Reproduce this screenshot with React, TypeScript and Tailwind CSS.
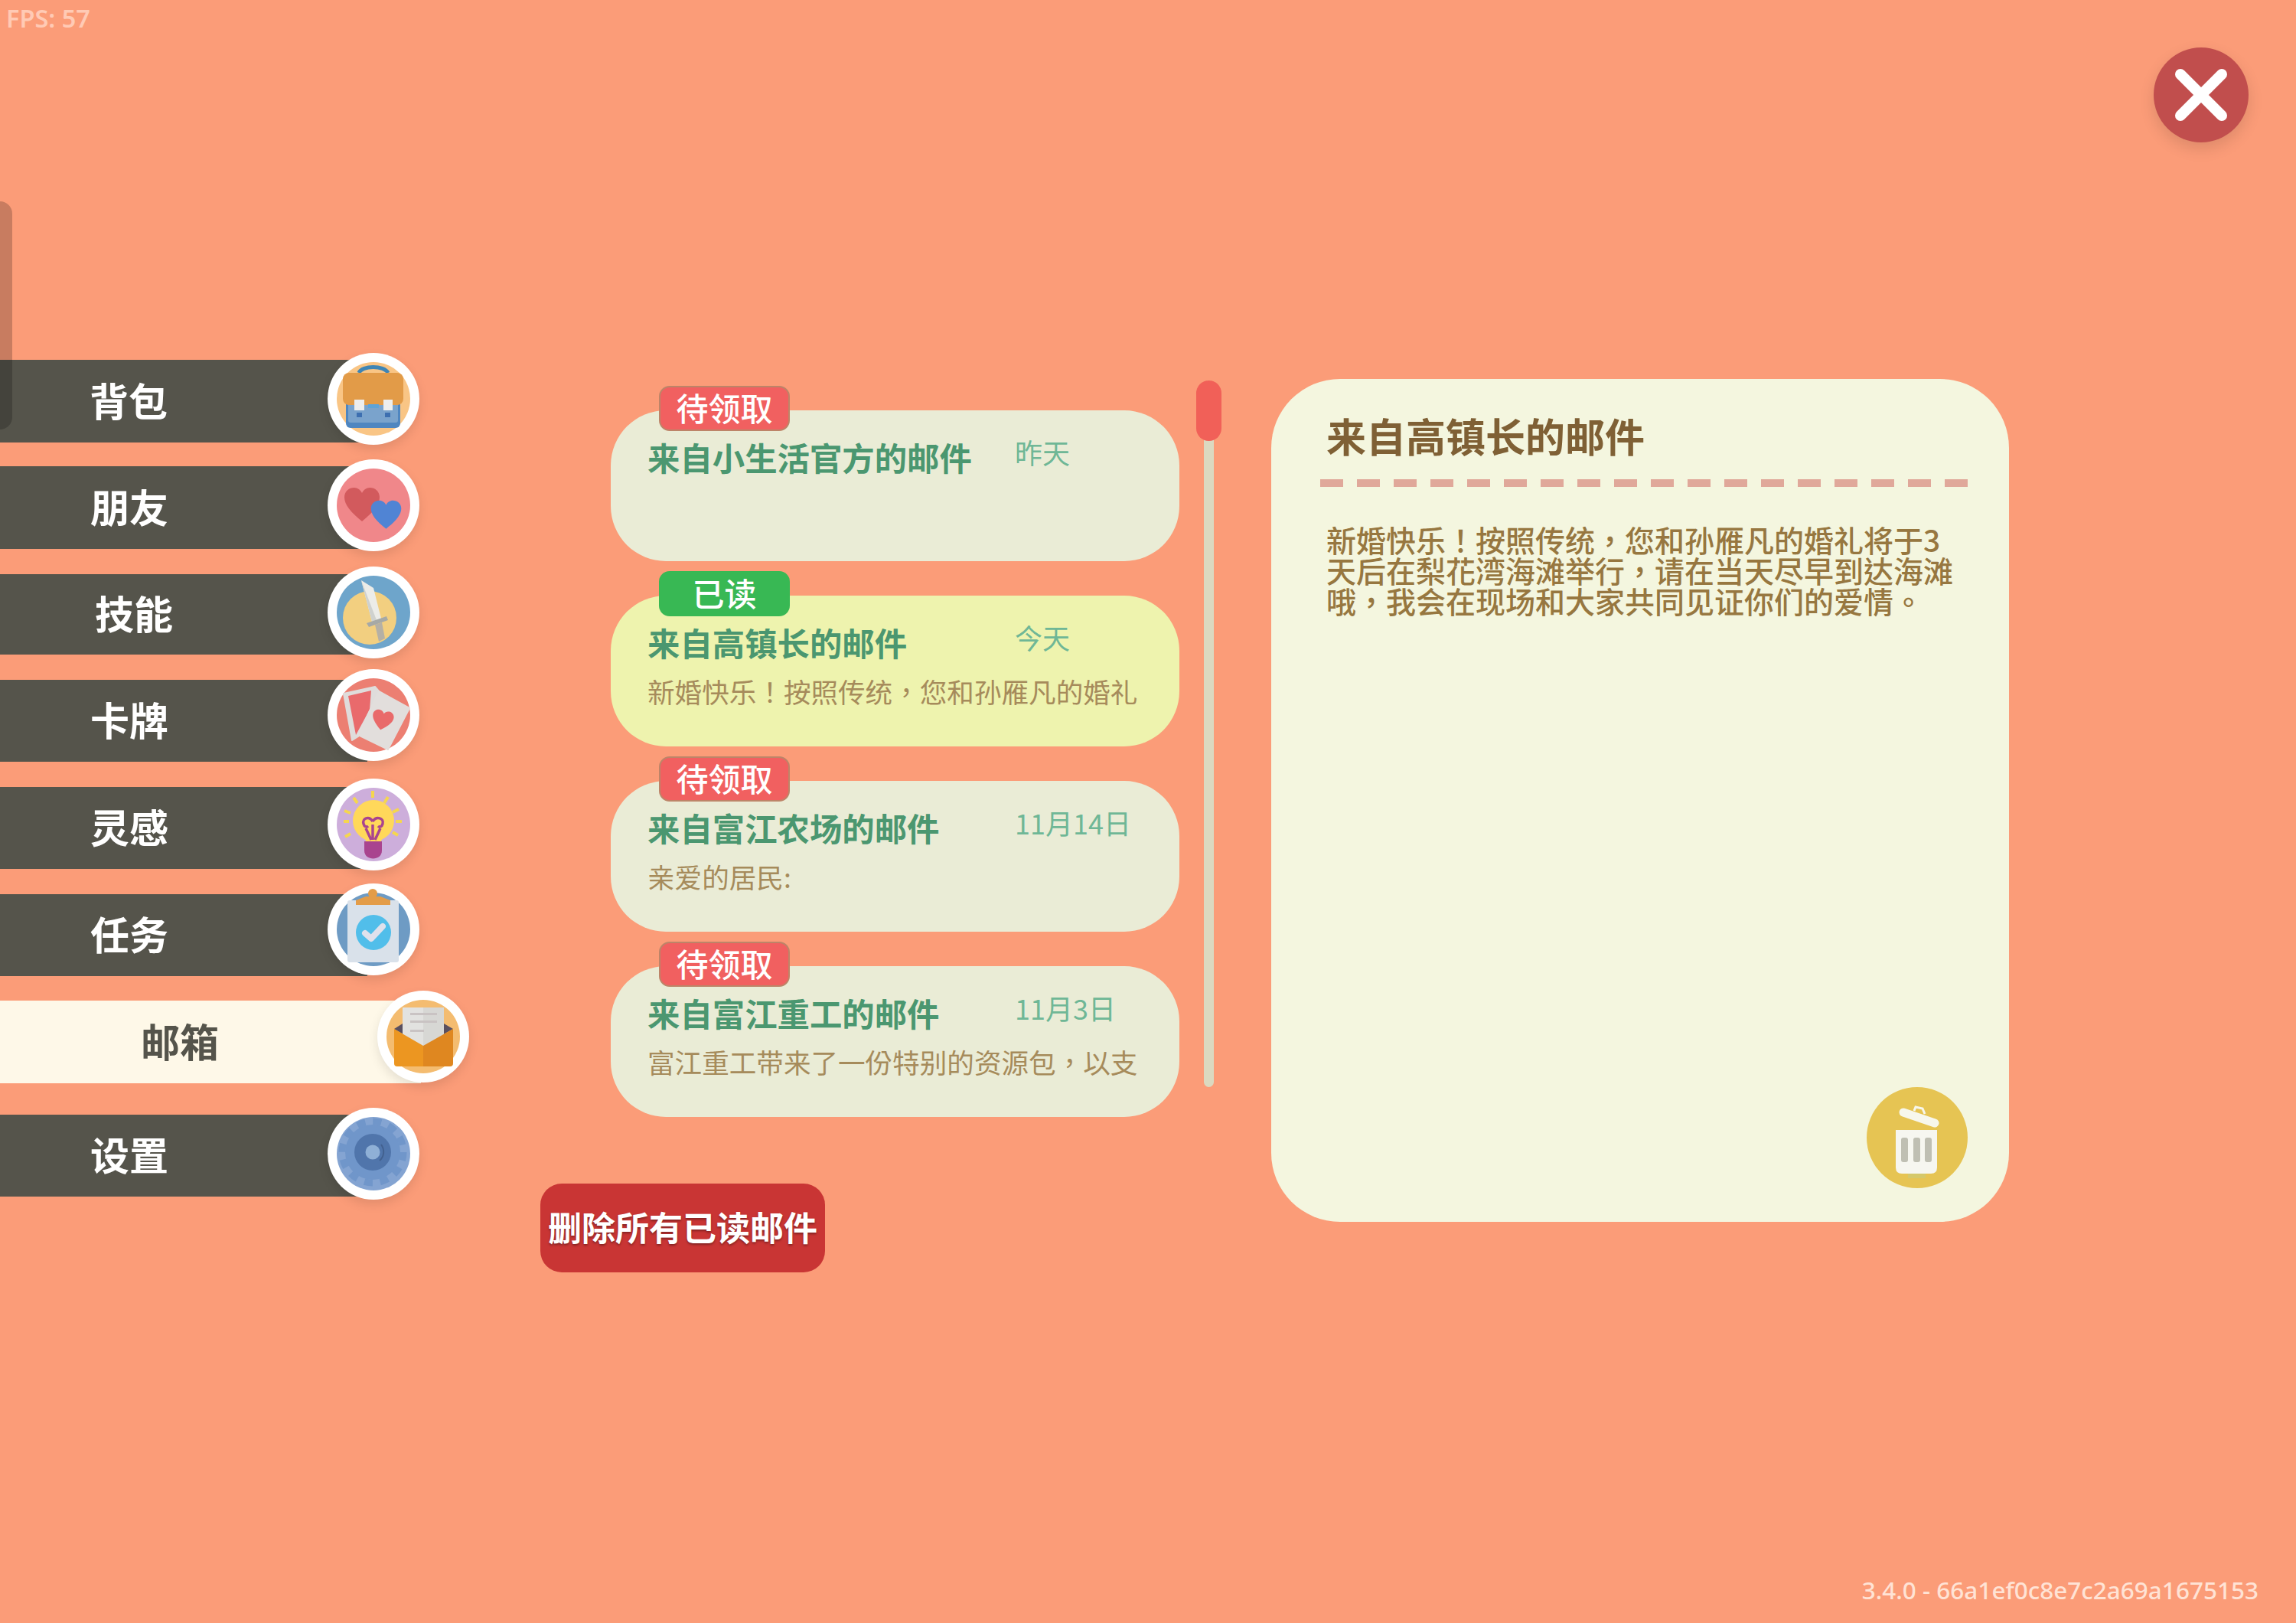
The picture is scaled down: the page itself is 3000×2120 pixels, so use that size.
const heart =
  "M50 92C20 68 4 48 4 29C4 13 17 4 29 4C39 4 46 10 50 18C54 10 61 4 71 4C83 4 96 13 96 29C96 48 80 68 50 92Z";

function BagIcon() {
  return (
    <svg viewBox="0 0 96 96" className="w-[96px] h-[96px] overflow-visible">
      <circle cx="48" cy="48" r="48" fill="#f9c585" />
      <path d="M29 14C33 4 62 4 67 14" fill="none" stroke="#3e85b5" strokeWidth="5" />
      <rect x="12" y="48" width="71" height="38" rx="6" fill="#4f86c0" />
      <rect x="15" y="50" width="65" height="29" rx="3" fill="#7aa3cc" />
      <rect x="8" y="14" width="79" height="42" rx="8" fill="#e29b48" />
      <rect x="41" y="55" width="14" height="5" fill="#5ea3d8" />
      <rect x="23" y="49" width="13" height="14" fill="#eeeeee" />
      <rect x="61" y="49" width="12" height="14" fill="#eeeeee" />
      <rect x="26" y="66" width="7" height="6" fill="#3d6fb0" />
      <rect x="63" y="66" width="7" height="6" fill="#3d6fb0" />
    </svg>
  );
}

function HeartsIcon() {
  return (
    <svg viewBox="0 0 96 96" className="w-[96px] h-[96px]">
      <circle cx="48" cy="48" r="48" fill="#f0878a" />
      <path d={heart} fill="#d25a5d" transform="translate(8 23) scale(0.5 0.5)" />
      <path d={heart} fill="#5084d4" transform="translate(43 40) scale(0.43 0.42)" />
    </svg>
  );
}

function SwordIcon() {
  return (
    <svg viewBox="0 0 96 96" className="w-[96px] h-[96px] overflow-visible">
      <circle cx="48" cy="48" r="48" fill="#6ea5cb" />
      <circle cx="43" cy="55" r="35" fill="#f2cf80" />
      <path d="M32 6L48 16L58 56L46 60Z" fill="#ecece8" />
      <path d="M32 6L46 60L52 58Z" fill="#cfd1ce" />
      <path d="M39 62L65 53L67 58L42 67Z" fill="#a6a9a6" />
      <path d="M50 64L59 61L63 82L55 86Z" fill="#b5b0a5" />
    </svg>
  );
}

function CardsIcon() {
  return (
    <svg viewBox="0 0 96 96" className="w-[96px] h-[96px] overflow-visible">
      <circle cx="48" cy="48" r="48" fill="#ec7f72" />
      <path d="M9 20L50 11L56 18L28 76L20 81Z" fill="#dfdcdb" stroke="#dfdcdb" strokeWidth="2" strokeLinejoin="round" />
      <path d="M15 23L45 16L43 41L25 74Z" fill="#e96a6c" />
      <path d="M55 17L95 39L67 93L28 74Z" fill="#e2dedc" stroke="#e2dedc" strokeWidth="2" strokeLinejoin="round" />
      <path d={heart} fill="#e96a6a" transform="translate(48 38) rotate(12) scale(0.3 0.29)" />
    </svg>
  );
}

function BulbIcon() {
  const rays = [
    [9, 44, 16, 44],
    [10, 30, 18, 33],
    [22, 13, 27, 20],
    [47, 4, 47, 13],
    [67, 12, 62, 20],
    [81, 28, 73, 32],
    [85, 44, 77, 44],
    [80, 62, 73, 58],
    [11, 64, 18, 60],
  ];
  return (
    <svg viewBox="0 0 96 96" className="w-[96px] h-[96px]">
      <circle cx="48" cy="48" r="48" fill="#cdaedb" />
      {rays.map((r, i) => (
        <line key={i} x1={r[0]} y1={r[1]} x2={r[2]} y2={r[3]} stroke="#f5d64f" strokeWidth="4" />
      ))}
      <circle cx="48" cy="43" r="27" fill="#ffd85a" />
      <path d="M36 62L60 62L57 74L39 74Z" fill="#ffd85a" />
      <path
        d="M47 68L47 48M47 44C42 36 33 40 35 47C36 51 39 52 41 50M47 44C52 36 62 40 60 47C59 51 56 52 54 50M38 53L45 68M57 53L50 68"
        fill="none"
        stroke="#a9448f"
        strokeWidth="3.5"
      />
      <path d="M36 70L59 70L59 82C59 96 36 96 36 82Z" fill="#a9448f" />
    </svg>
  );
}

function ClipboardIcon() {
  return (
    <svg viewBox="0 0 96 96" className="w-[96px] h-[96px] overflow-visible">
      <circle cx="48" cy="48" r="48" fill="#6e9bc4" />
      <rect x="14" y="10" width="67" height="81" rx="3" fill="#d9e1ea" />
      <circle cx="47" cy="1" r="6" fill="#e39c48" />
      <path d="M25 16L25 10L38 5L57 5L70 10L70 16Z" fill="#e39c48" />
      <circle cx="48" cy="52" r="23" fill="#51beea" />
      <path d="M37 53L45 60L60 44" fill="none" stroke="#dfe1ec" strokeWidth="8" strokeLinecap="round" strokeLinejoin="round" />
    </svg>
  );
}

function MailIcon() {
  return (
    <svg viewBox="0 0 96 96" className="w-[96px] h-[96px]">
      <circle cx="48" cy="48" r="48" fill="#f4bc70" />
      <path d="M10 38L21 31L75 31L87 38L48 60Z" fill="#5a5060" />
      <rect x="21" y="10" width="54" height="52" fill="#e2e2e0" />
      <rect x="48" y="10" width="27" height="52" fill="#d7d7d4" />
      <rect x="31" y="17" width="35" height="3" fill="#c9c3c3" />
      <rect x="31" y="27" width="35" height="3" fill="#c9c3c3" />
      <rect x="31" y="39" width="18" height="3" fill="#c9c3c3" />
      <path d="M10 38L48 60L48 87L14 87Q10 87 10 83Z" fill="#ec9621" />
      <path d="M87 38L48 60L48 87L83 87Q87 87 87 83Z" fill="#df8720" />
    </svg>
  );
}

function GearIcon() {
  return (
    <svg viewBox="0 0 96 96" className="w-[96px] h-[96px]">
      <circle cx="48" cy="48" r="48" fill="#84a4d2" />
      <circle cx="47" cy="46" r="36" fill="#7096ca" />
      <circle cx="47" cy="46" r="40" fill="none" stroke="#7096ca" strokeWidth="9" strokeDasharray="11 9.94" />
      <circle cx="47" cy="46" r="24" fill="#5075ab" />
      <path d="M58 36C63 43 62 52 56 57" fill="none" stroke="#42618f" strokeWidth="2" />
      <circle cx="47" cy="46" r="9.5" fill="#8fb0d6" />
    </svg>
  );
}

const menu = [
  { label: "背包", Icon: BagIcon, row: "mt-0 h-[108px]", circle: "top-[-9px]", text: "pl-[117px]" },
  { label: "朋友", Icon: HeartsIcon, row: "mt-[31px] h-[108px]", circle: "top-[-9px]", text: "pl-[118px]" },
  { label: "技能", Icon: SwordIcon, row: "mt-[33px] h-[105px]", circle: "top-[-10px]", text: "pl-[124px]" },
  { label: "卡牌", Icon: CardsIcon, row: "mt-[33px] h-[107px]", circle: "top-[-14px]", text: "pl-[118px]" },
  { label: "灵感", Icon: BulbIcon, row: "mt-[33px] h-[107px]", circle: "top-[-11px]", text: "pl-[118px]" },
  { label: "任务", Icon: ClipboardIcon, row: "mt-[33px] h-[107px]", circle: "top-[-14px]", text: "pl-[118px]" },
  { label: "邮箱", Icon: MailIcon, row: "mt-[32px] h-[108px]", circle: "top-[-13px]", text: "pl-[184px]", active: true },
  { label: "设置", Icon: GearIcon, row: "mt-[41px] h-[107px]", circle: "top-[-9px]", text: "pl-[118px]" },
];

const mails = [
  { title: "来自小生活官方的邮件", date: "昨天", desc: "", badge: "待领取" },
  { title: "来自高镇长的邮件", date: "今天", desc: "新婚快乐！按照传统，您和孙雁凡的婚礼", badge: "已读", active: true },
  { title: "来自富江农场的邮件", date: "11月14日", desc: "亲爱的居民:", badge: "待领取" },
  { title: "来自富江重工的邮件", date: "11月3日", desc: "富江重工带来了一份特别的资源包，以支", badge: "待领取" },
];

function MenuRow({ item }: { item: (typeof menu)[number] }) {
  const { Icon } = item;
  return (
    <div className={`relative ${item.row}`}>
      <div
        className={`h-full flex items-center pb-[4px] font-bold text-[51px] ${item.text} ${
          item.active ? "w-[550px] bg-[#fef8e8] text-[#55544b]" : "w-[480px] bg-[#55544b] text-white"
        }`}
      >
        {item.label}
      </div>
      <div
        className={`absolute ${item.circle} ${
          item.active ? "left-[493px]" : "left-[428px]"
        } w-[120px] h-[120px] rounded-full bg-white flex items-center justify-center shadow-[0_6px_14px_rgba(0,0,0,0.1)]`}
      >
        <Icon />
      </div>
    </div>
  );
}

function MailCard({ mail }: { mail: (typeof mails)[number] }) {
  return (
    <div
      className={`relative h-[197px] rounded-[72px] pl-[48px] pt-[36px] ${
        mail.active ? "bg-[#eef3ae]" : "bg-[#eaecd6]"
      }`}
    >
      <div
        className={`absolute left-[63px] top-[-32px] w-[171px] h-[59px] pb-[4px] rounded-[14px] flex items-center justify-center text-white font-medium text-[42px] ${
          mail.active ? "bg-[#38b854]" : "bg-[#f16060] border-2 border-[#bd8468]"
        }`}
      >
        {mail.badge}
      </div>
      <div className="flex items-start">
        <div className="w-[480px] text-[42.4px] leading-[50px] font-bold text-[#4b9770]">{mail.title}</div>
        <div className="text-[36px] leading-[36px] text-[#6fb796]">{mail.date}</div>
      </div>
      <div className="mt-[21px] whitespace-nowrap text-[35.6px] leading-[36px] text-[#a68b5b] font-['Noto_Sans_CJK_TC',sans-serif]">
        {mail.desc}
      </div>
    </div>
  );
}

export default function App() {
  return (
    <div className="relative w-[3000px] h-[2120px] overflow-hidden flex flex-col bg-[#fb9c78] font-['Noto_Sans_CJK_SC',sans-serif]">
      <div className="absolute left-0 top-[263px] w-[16px] h-[298px] rounded-r-[18px] bg-black/20 z-10" />

      <div className="flex justify-between items-start">
        <div className="pl-[8px] pt-[4px] text-[32.5px] leading-[40px] font-semibold text-[#ffcab5] font-['Noto_Sans',sans-serif]">
          FPS: 57
        </div>
        <button className="mt-[62px] mr-[62px] w-[124px] h-[124px] rounded-full bg-[#c14e4d] flex items-center justify-center shadow-[0_8px_20px_rgba(0,0,0,0.12)]">
          <svg viewBox="0 0 124 124" className="w-[124px] h-[124px]">
            <path d="M35 35L89 89M89 35L35 89" stroke="white" strokeWidth="14" strokeLinecap="round" />
          </svg>
        </button>
      </div>

      <div className="flex items-start mt-[284px]">
        <div className="w-[706px] flex flex-col">
          {menu.map((item) => (
            <MenuRow key={item.label} item={item} />
          ))}
        </div>

        <div className="w-[890px] flex flex-col pt-[27px]">
          <div className="flex items-start">
            <div className="ml-[92px] mt-[39px] w-[743px] flex flex-col gap-[45px]">
              {mails.map((mail) => (
                <MailCard key={mail.title} mail={mail} />
              ))}
            </div>
            <div className="relative ml-[22px] w-[33px] h-[923px] flex justify-center">
              <div className="w-[13px] h-full rounded-full bg-[#dbd9c0]" />
              <div className="absolute top-0 left-0 w-[33px] h-[79px] rounded-full bg-[#f16058]" />
            </div>
          </div>
          <button className="mt-[87px] w-[372px] h-[116px] pb-[4px] rounded-[28px] bg-[#c93534] text-white font-bold text-[44px] flex items-center justify-center [text-shadow:0_2px_3px_rgba(0,0,0,0.35)]">
            删除所有已读邮件
          </button>
        </div>

        <div className="ml-[65px] mt-[25px] w-[964px] h-[1101px] rounded-[90px] bg-[#f4f6df] flex flex-col pt-[44px]">
          <div className="pl-[72px] text-[52px] leading-[60px] font-bold text-[#7f6035]">来自高镇长的邮件</div>
          <div className="ml-[64px] mt-[27px] w-[846px] flex justify-between">
            {Array.from({ length: 18 }).map((_, i) => (
              <span key={i} className="w-[30px] h-[10px] bg-[#e0a89a]" />
            ))}
          </div>
          <div className="ml-[72px] mt-[48px] w-[830px] text-[39px] leading-[40px] font-medium text-[#977740] font-['Noto_Sans_CJK_TC',sans-serif]">
            新婚快乐！按照传统，您和孙雁凡的婚礼将于3天后在梨花湾海滩举行，请在当天尽早到达海滩哦，我会在现场和大家共同见证你们的爱情。
          </div>
          <button className="mt-auto mb-[44px] mr-[54px] self-end w-[132px] h-[132px] rounded-full bg-[#e6c453]">
            <svg viewBox="0 0 132 132" className="w-[132px] h-[132px]">
              <path d="M62 31L64 26L73 28L76 35" fill="none" stroke="#f7f7ec" strokeWidth="3" />
              <path d="M48 33L89 47" stroke="#f7f7ec" strokeWidth="11" strokeLinecap="round" />
              <path d="M38 56L92 56L92 105Q92 113 84 113L46 113Q38 113 38 105Z" fill="#f6f6f0" />
              <rect x="45" y="66" width="9" height="32" rx="3" fill="#bfbfb3" />
              <rect x="61" y="66" width="9" height="32" rx="3" fill="#bfbfb3" />
              <rect x="76" y="66" width="9" height="32" rx="3" fill="#bfbfb3" />
              <rect x="54" y="113" width="23" height="6" fill="#d5c86a" />
            </svg>
          </button>
        </div>
      </div>

      <div className="mt-auto self-end pr-[49px] pb-[23px] text-[31.5px] leading-[40px] font-medium text-[#ffe3d5] font-['Noto_Sans',sans-serif]">
        3.4.0 - 66a1ef0c8e7c2a69a1675153
      </div>
    </div>
  );
}
